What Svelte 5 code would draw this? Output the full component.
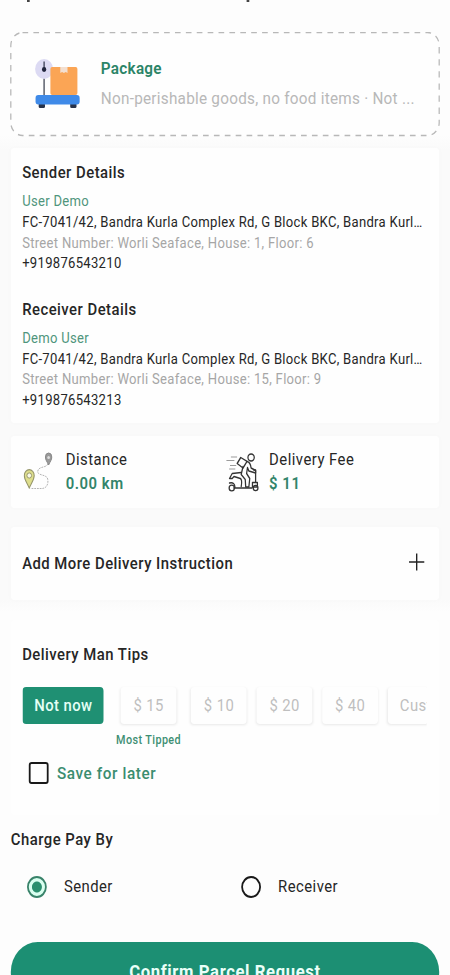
<script lang="ts">
  type Party = { title: string; name: string; address: string; street: string; phone: string };

  const parties: Party[] = [
    {
      title: 'Sender Details',
      name: 'User Demo',
      address: 'FC-7041/42, Bandra Kurla Complex Rd, G Block BKC, Bandra Kurl…',
      street: 'Street Number: Worli Seaface, House: 1, Floor: 6',
      phone: '+919876543210'
    },
    {
      title: 'Receiver Details',
      name: 'Demo User',
      address: 'FC-7041/42, Bandra Kurla Complex Rd, G Block BKC, Bandra Kurl…',
      street: 'Street Number: Worli Seaface, House: 15, Floor: 9',
      phone: '+919876543213'
    }
  ];

  const tips = ['$ 15', '$ 10', '$ 20', '$ 40', 'Custom'];
  const payers = ['Sender', 'Receiver'];

  let tip = $state('Not now');
  let payer = $state('Sender');
  let save = $state(false);
</script>

<div class="viewport">
  <main>
    <div class="cut"><i></i><i></i></div>

    <section class="parcel">
      <svg class="dash" width="478" height="105" viewBox="0 0 478 105">
        <rect x="1" y="0.500" width="476" height="103" rx="13" />
      </svg>
      <svg class="scale" width="50" height="52" viewBox="0 0 50 52">
        <path d="M10 20v22" stroke="#555a66" stroke-width="1.6" />
        <circle cx="10" cy="11" r="10" fill="#dcdaf3" />
        <path d="M10 3.5v8" stroke="#34384e" stroke-width="1.4" />
        <circle cx="10" cy="11.5" r="2.4" fill="#20243c" />
        <rect x="17" y="9" width="30" height="28" rx="2" fill="#fba555" />
        <path d="M28 9h8v6l-2-1-2 1-2-1-2 1z" fill="#f3dfd0" />
        <rect x="4" y="45" width="7" height="5" rx="1.5" fill="#27324a" />
        <rect x="39" y="45" width="7" height="5" rx="1.5" fill="#27324a" />
        <rect x="0.500" y="37" width="49" height="9.500" rx="3" fill="#3f8ae8" />
      </svg>
      <div class="about">
        <h2>Package</h2>
        <p>Non-perishable goods, no food items · Not ...</p>
      </div>
    </section>

    <section class="card details">
      {#each parties as p}
        <div class="party">
          <h3>{p.title}</h3>
          <p class="name">{p.name}</p>
          <p class="address">{p.address}</p>
          <p class="street">{p.street}</p>
          <p class="phone">{p.phone}</p>
        </div>
      {/each}
    </section>

    <section class="card stats">
      <div class="stat">
        <svg width="34" height="40" viewBox="0 0 34 40" fill="none">
          <path d="M27 12c-1 4-10 2-11 7s10 3 11 8-1 9-6 9.500H8" stroke="#b0b0b0" stroke-width="1" stroke-dasharray="2 1" />
          <path d="M28 13c-2-4-3.500-5-3.500-8a3.500 4 0 0 1 7 0c0 3-1.500 4-3.500 8z" fill="#9a9a9a" stroke="#858585" />
          <circle cx="28" cy="5.500" r="1.500" fill="#ddd" />
          <path d="M6.500 36C3.500 30 1 27.500 1 23.500a5.500 5.800 0 0 1 11 0c0 4-2.500 6.500-5.500 12.500z" fill="#dede8c" stroke="#96966b" stroke-width="1.200" />
          <circle cx="6.500" cy="23.500" r="2.600" fill="#fafae8" stroke="#96966b" />
        </svg>
        <div>
          <p>Distance</p>
          <b>0.00 km</b>
        </div>
      </div>
      <div class="stat fee">
        <svg width="38" height="40" viewBox="0 0 38 40" fill="none" stroke="#333" stroke-width="1.400" stroke-linejoin="round" stroke-linecap="round">
          <path d="M6 5h6M1 8.500h8M5 13.500h6M4 17h6" stroke="#969696" stroke-width="1" />
          <circle cx="28" cy="5.500" r="3.500" />
          <path d="M16.500 5.500l7 3.800-4.500 6.700-6.500-4.500z" />
          <path d="M23.500 9.500c3 .5 4 3 4.500 6.500l5 2.500v2.500l-7.500-2-1.500-3.500-1 6 3.500 5-1 8.500h-3.500l-.5-7.500-4.500-5 2-8" />
          <path d="M17 20.500l-10 1-3 5h3l2-2 7 2c2 1 2 3 1 8" />
          <path d="M33 18v12M33 18h-2M9 36h20M4 31c4-1 6 1 6 4M29.500 30.500h5.500v4.500h-5.500z" />
          <circle cx="6.500" cy="36" r="2.900" />
          <circle cx="33" cy="36" r="2.600" />
        </svg>
        <div>
          <p>Delivery Fee</p>
          <b>$ 11</b>
        </div>
      </div>
    </section>

    <section class="card instruction">
      <h3>Add More Delivery Instruction</h3>
      <svg width="18" height="18" viewBox="0 0 18 18">
        <path d="M9 .5v17M.5 9h17" stroke="#222" stroke-width="1.500" />
      </svg>
    </section>

    <section class="card tips">
      <h3>Delivery Man Tips</h3>
      <div class="chips">
        <button class="chip none" class:on={tip === 'Not now'} onclick={() => (tip = 'Not now')}>Not now</button>
        {#each tips as t, i}
          <div class="slot" class:popular={i === 0}>
            <button class="chip" class:on={tip === t} onclick={() => (tip = t)}>{t}</button>
            {#if i === 0}<small>Most Tipped</small>{/if}
          </div>
        {/each}
      </div>
      <label class="save">
        <input type="checkbox" bind:checked={save} />
        <span>Save for later</span>
      </label>
    </section>

    <section class="charge">
      <h3>Charge Pay By</h3>
      <div class="payers">
        {#each payers as p}
          <label>
            <input type="radio" name="payer" value={p} bind:group={payer} />
            <span>{p}</span>
          </label>
        {/each}
      </div>
    </section>

    <button class="confirm">Confirm Parcel Request</button>
  </main>
</div>

<style>
  :global(body) { background: #fdfdfd; }
  .viewport {
    width: 450px;
    height: 975px;
    overflow: hidden;
  }
  main {
    width: 500px;
    height: 975px;
    box-sizing: border-box;
    padding: 0 12px;
    overflow: hidden;
    background: linear-gradient(#fdfdfd 135px, #fafafa 150px, #fafafa 600px, #fdfdfd 612px);
    transform: scaleX(0.9);
    transform-origin: 0 0;
    font-family: Roboto, sans-serif;
    color: #262626;
  }
  h2, h3, p { margin: 0; }
  button { font-family: inherit; border: 0; padding: 0; }
  svg { flex: none; display: block; }

  .cut { display: flex; gap: 241px; height: 32px; padding-left: 18px; }
  .cut i { width: 3px; height: 1.5px; background: #444; }

  .parcel {
    position: relative;
    display: flex;
    align-items: center;
    height: 104px;
    padding-left: 27px;
    gap: 23px;
    border-radius: 13px;
    background: #fefefe;
  }
  .dash { position: absolute; left: -1px; top: 0; }
  .dash rect { fill: none; stroke: #b8b8b8; stroke-width: 1.4; stroke-dasharray: 6.3 5.8; }
  .scale { margin-top: -1px; }
  .about { margin-top: -2.5px; }
  h2 { font-size: 17px; line-height: 24px; font-weight: 600; letter-spacing: 0.3px; color: #2b8467; }
  .parcel p { margin-top: 7px; font-size: 17px; line-height: 22px; color: #b8b8b8; letter-spacing: 0.28px; white-space: nowrap; }

  .card { background: #fefefe; border-radius: 4px; box-shadow: 0 0 6px rgba(0, 0, 0, 0.015); }
  h3 { font-size: 16.5px; line-height: 24px; font-weight: 500; letter-spacing: 0.54px; }

  .details {
    display: flex;
    flex-direction: column;
    gap: 22.5px;
    height: 262px;
    margin-top: 12px;
    padding: 13px 12.6px 0;
  }
  .details h3 { margin-bottom: 7.2px; }
  .party p { font-size: 14.5px; line-height: 20.75px; letter-spacing: 0.34px; white-space: nowrap; }
  .party .name { color: #4f957c; }
  .party .street { color: #a6a6a6; }

  .stats { display: flex; align-items: center; height: 72px; margin-top: 13px; padding-left: 13.5px; }
  .stat { display: flex; align-items: center; gap: 13.5px; width: 225px; }
  .stat p { font-size: 16.5px; line-height: 24px; letter-spacing: 0.53px; }
  .stat b { display: block; font-size: 16.5px; line-height: 24px; font-weight: 600; letter-spacing: 0.6px; color: #32846a; }
  .fee { gap: 10.5px; }

  .instruction {
    display: flex;
    align-items: center;
    justify-content: space-between;
    height: 73px;
    margin-top: 19px;
    padding: 0 16px 0 12.6px;
  }
  .instruction svg { margin-top: -3px; }

  .tips { height: 173px; margin-top: 20px; padding: 23px 14px 0 12.6px; box-sizing: border-box; height: 195px; box-shadow: none; }
  .chips { display: flex; height: 73px; margin-top: 19px; overflow: hidden; padding: 0 0.8px; gap: 10.8px; }
  .chip {
    flex: none;
    height: 37px;
    min-width: 62px;
    padding: 0 13.5px;
    margin-top: 1px;
    border-radius: 4px;
    background: #fefefe;
    box-shadow: 0 1px 3px rgba(0, 0, 0, 0.09);
    font-size: 16.5px;
    letter-spacing: 0.45px;
    color: #bfbfbf;
  }
  .none { width: 90px; padding: 0; margin-right: 2.4px; }
  .on { background: #1f9073; color: #e4fff5; font-weight: 500; box-shadow: none; }
  .slot { flex: none; }
  .popular { display: flex; flex-direction: column; align-items: center; width: 73px; }
  small { margin-top: 8px; font-size: 12px; line-height: 16px; font-weight: 500; letter-spacing: 0.45px; color: #3d8f73; white-space: nowrap; }
  .save { display: flex; align-items: center; gap: 9px; height: 24px; margin-top: 2px; padding-left: 7.7px; }
  .save span { font-size: 17px; font-weight: 500; letter-spacing: 0.65px; color: #3b8d70; }
  input { appearance: none; margin: 0; width: 22px; height: 22px; box-sizing: border-box; border: 2px solid #191919; }
  input[type='checkbox'] { border-radius: 3px; }

  .charge { margin-top: 13px; height: 114px; }
  .payers { display: flex; margin-top: 23px; padding-left: 18px; }
  .payers label { flex: none; display: flex; align-items: center; gap: 19px; width: 238px; height: 23px; }
  .payers span { font-size: 16.5px; letter-spacing: 0.5px; }
  input[type='radio'] { border-radius: 50%; }
  input[type='radio']:checked {
    border-color: #39836a;
    background: radial-gradient(circle, #2a8f6e 5px, #d9fff0 6px);
  }

  .confirm {
    display: block;
    width: 476px;
    height: 60px;
    border-radius: 31px;
    background: #1c8f73;
    color: #e9fff8;
    font-size: 18.5px;
    font-weight: 700;
    letter-spacing: 0.68px;
  }
</style>
